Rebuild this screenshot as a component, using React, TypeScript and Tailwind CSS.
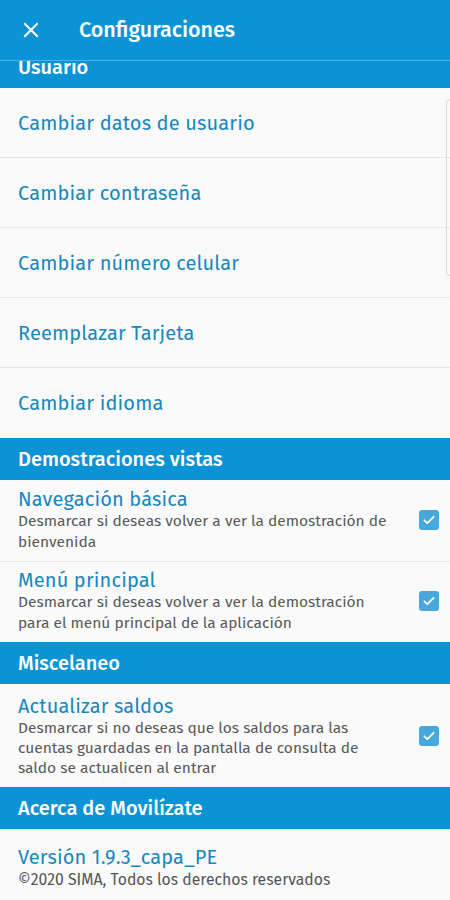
import React from "react";

const font = { fontFamily: '"Fira Sans", "Open Sans", "Noto Sans", sans-serif' };

function Check() {
  return (
    <div className="w-[20px] h-[20px] rounded-[3px] bg-[#48a8de] flex items-center justify-center">
      <svg width="14" height="14" viewBox="0 0 24 24" fill="none">
        <path d="M4 12.5l5 5L20 6.5" stroke="white" strokeWidth="3" strokeLinecap="round" strokeLinejoin="round" />
      </svg>
    </div>
  );
}

function SectionHeader({ label }: { label: string }) {
  return (
    <div className="h-[42px] bg-[#0a93d5] flex items-center px-[18px] text-white text-[20px] font-medium">
      {label}
    </div>
  );
}

function LinkRow({ label, last }: { label: string; last?: boolean }) {
  return (
    <div className={`h-[70px] flex items-center px-[18px] text-[#1787bd] text-[20px] tracking-[0.15px] ${last ? "" : "border-b border-[#e6e6e6]"}`}>
      {label}
    </div>
  );
}

function CheckRow({
  title,
  lines,
  className,
  lh,
}: {
  title: string;
  lines: string[];
  className: string;
  lh: string;
}) {
  return (
    <div className={`flex items-center pl-[18px] pr-[11px] ${className}`}>
      <div className="flex-1">
        <div className="text-[#1787bd] text-[20px] tracking-[0.15px] leading-[24px]">{title}</div>
        {lines.map((l, i) => (
          <div key={i} className={`text-[#595959] text-[15.5px] whitespace-nowrap ${lh}`}>
            {l}
          </div>
        ))}
      </div>
      <Check />
    </div>
  );
}

export default function App() {
  return (
    <div className="w-[450px] h-[900px] bg-[#fafafa] relative overflow-hidden" style={font}>
      <div className="h-[61px] bg-[#0a93d5] flex items-center relative z-10 border-b border-[#4fb0e2]">
        <div className="w-[79px] flex items-center pl-[23px]">
          <svg width="16" height="16" viewBox="0 0 16 16">
            <path d="M2 2L14 14M14 2L2 14" stroke="white" strokeWidth="2" strokeLinecap="square" />
          </svg>
        </div>
        <div className="text-white text-[21.5px] font-medium">Configuraciones</div>
      </div>
      <div className="h-[27px] bg-[#0a93d5] overflow-hidden px-[18px]">
        <div className="text-white text-[20px] font-medium leading-[24px] -mt-[6px]">Usuario</div>
      </div>
      <LinkRow label="Cambiar datos de usuario" />
      <LinkRow label="Cambiar contraseña" />
      <LinkRow label="Cambiar número celular" />
      <LinkRow label="Reemplazar Tarjeta" />
      <LinkRow label="Cambiar idioma" last />
      <SectionHeader label="Demostraciones vistas" />
      <CheckRow
        title="Navegación básica"
        lines={["Desmarcar si deseas volver a ver la demostración de", "bienvenida"]}
        className="pt-[7px] pb-[8px] border-b border-[#e6e6e6]"
        lh="leading-[21px]"
      />
      <CheckRow
        title="Menú principal"
        lines={["Desmarcar si deseas volver a ver la demostración", "para el menú principal de la aplicación"]}
        className="pt-[6px] pb-[8px]"
        lh="leading-[21px]"
      />
      <SectionHeader label="Miscelaneo" />
      <CheckRow
        title="Actualizar saldos"
        lines={[
          "Desmarcar si no deseas que los saldos para las",
          "cuentas guardadas en la pantalla de consulta de",
          "saldo se actualicen al entrar",
        ]}
        className="pt-[10px] pb-[9px]"
        lh="leading-[20px]"
      />
      <SectionHeader label="Acerca de Movilízate" />
      <div className="px-[18px] pt-[16px]">
        <div className="text-[#1787bd] text-[20px] tracking-[0.15px] leading-[24px]">Versión 1.9.3_capa_PE</div>
        <div className="text-[#555] text-[15.75px] leading-[22px]">©2020 SIMA, Todos los derechos reservados</div>
      </div>
      <div className="absolute left-[446px] top-[99px] w-[10px] h-[177px] rounded-[4px] border border-[#d8d8d8]" />
    </div>
  );
}
